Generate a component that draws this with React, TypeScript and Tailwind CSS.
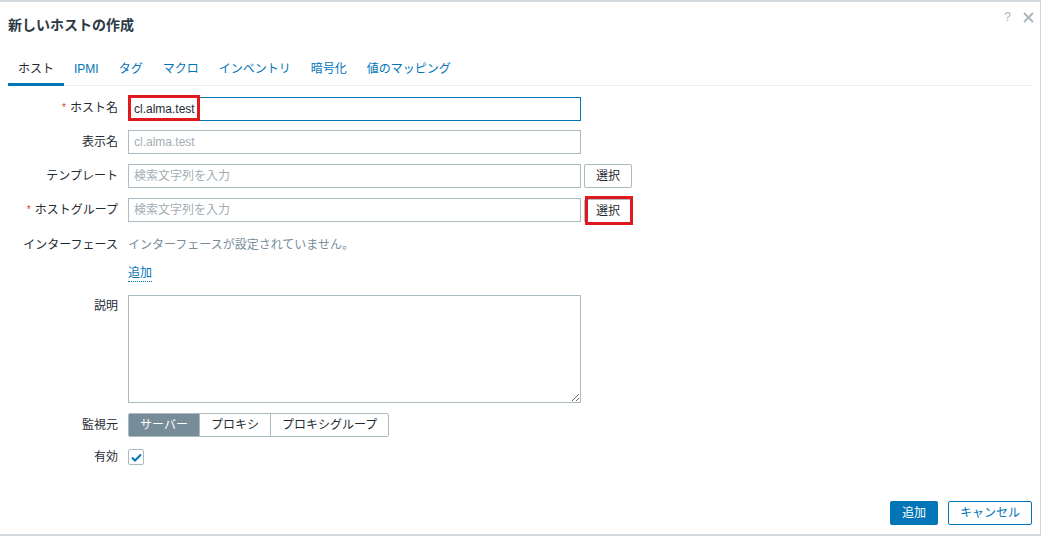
import { ReactNode } from 'react'

const font = "font-['Liberation_Sans','Noto_Sans_CJK_JP',sans-serif]"

function Label({ children, required }: { children: ReactNode; required?: boolean }) {
  return (
    <div className="w-[110px] mr-[10px] shrink-0 text-right text-[12px] leading-[16px] text-[#1f2c33]">
      {required && <span className="text-[#e33734] text-[10px] mr-[4px] align-top">*</span>}
      {children}
    </div>
  )
}

function SelectButton() {
  return (
    <button className="ml-[3px] h-[24px] w-[48px] border border-[#acbbc2] rounded-[2px] bg-white text-[12px] text-[#1f2c33]">
      選択
    </button>
  )
}

const tabs = ['ホスト', 'IPMI', 'タグ', 'マクロ', 'インベントリ', '暗号化', '値のマッピング']

export default function App() {
  return (
    <div className={`${font} w-[1041px] h-[536px] bg-[#d3d8dc] flex flex-col`}>
      <div className="mt-[2px] mb-[2px] mr-[1px] flex-1 bg-white flex flex-col pl-[8px] pr-[8px] relative">
        {/* header */}
        <div className="pt-[13px] h-[51px] flex items-start justify-between">
          <h4 className="text-[14px] leading-[20px] font-bold text-[#2b3a42]">新しいホストの作成</h4>
          <div className="flex items-center gap-[12px] -mt-[7px] mr-[-2px] text-[#aab4ba]">
            <span className="text-[12px]">?</span>
            <svg width="11" height="11" viewBox="0 0 11 11" stroke="currentColor" strokeWidth="1.8">
              <path d="M1 1 L10 10 M10 1 L1 10" />
            </svg>
          </div>
        </div>

        {/* tabs */}
        <div className="flex border-b border-[#ebeef0]">
          {tabs.map((t, i) => (
            <div
              key={t}
              className={`px-[10px] pt-[8px] pb-[6px] text-[12px] leading-[16px] border-b-[3px] -mb-px ${
                i === 0 ? 'border-[#0275b8] text-[#1f2c33]' : 'border-transparent text-[#0275b8]'
              }`}
            >
              {t}
            </div>
          ))}
        </div>

        {/* form */}
        <div className="pt-[10px] flex flex-col">
          <div className="flex items-center h-[24px]">
            <Label required>ホスト名</Label>
            <div className="relative">
              <input
                readOnly
                value="cl.alma.test"
                className="w-[453px] h-[24px] border border-[#0275b8] px-[5px] text-[12px] text-[#1f2c33] outline-none"
              />
              <div className="absolute left-0 top-[-1px] w-[72px] h-[26px] border-[3px] border-[#e0191f]" />
            </div>
          </div>

          <div className="flex items-center h-[24px] mt-[10px]">
            <Label>表示名</Label>
            <input
              readOnly
              placeholder="cl.alma.test"
              className="w-[453px] h-[24px] border border-[#acbbc2] px-[5px] text-[12px] placeholder:text-[#a3aeb4] outline-none"
            />
          </div>

          <div className="flex items-center h-[24px] mt-[10px]">
            <Label>テンプレート</Label>
            <input
              readOnly
              placeholder="検索文字列を入力"
              className="w-[453px] h-[24px] border border-[#acbbc2] px-[5px] text-[12px] placeholder:text-[#a3aeb4] outline-none"
            />
            <SelectButton />
          </div>

          <div className="flex items-center h-[24px] mt-[10px]">
            <Label required>ホストグループ</Label>
            <input
              readOnly
              placeholder="検索文字列を入力"
              className="w-[453px] h-[24px] border border-[#acbbc2] px-[5px] text-[12px] placeholder:text-[#a3aeb4] outline-none"
            />
            <div className="relative">
              <SelectButton />
              <div className="absolute left-[4px] top-[-2px] w-[48px] h-[29px] border-[3px] border-[#e0191f]" />
            </div>
          </div>

          <div className="flex items-center h-[22px] mt-[12px]">
            <Label>インターフェース</Label>
            <span className="text-[12px] text-[#768d99]">インターフェースが設定されていません。</span>
          </div>

          <div className="flex items-start h-[19px] mt-[10px]">
            <div className="w-[120px] shrink-0" />
            <span className="text-[12px] leading-[15px] text-[#0275b8] border-b border-dotted border-[#0275b8]">追加</span>
          </div>

          <div className="flex items-start mt-[10px]">
            <div className="pt-[3px]">
              <Label>説明</Label>
            </div>
            <textarea className="w-[453px] h-[108px] border border-[#acbbc2] outline-none block" />
          </div>

          <div className="flex items-center h-[24px] mt-[10px]">
            <Label>監視元</Label>
            <div className="flex h-[24px] border border-[#acbbc2] rounded-[2px] text-[12px]">
              <div className="px-[11px] flex items-center bg-[#768d99] text-white">サーバー</div>
              <div className="px-[11px] flex items-center text-[#1f2c33] border-l border-[#acbbc2]">プロキシ</div>
              <div className="px-[11px] flex items-center text-[#1f2c33] border-l border-[#acbbc2]">プロキシグループ</div>
            </div>
          </div>

          <div className="flex items-center h-[22px] mt-[9px]">
            <Label>有効</Label>
            <div className="w-[16px] h-[16px] border border-[#acbbc2] rounded-[2px] flex items-center justify-center">
              <svg width="11" height="9" viewBox="0 0 11 9" fill="none" stroke="#0275b8" strokeWidth="2">
                <path d="M1 4.5 L4 7.5 L10 1.5" />
              </svg>
            </div>
          </div>
        </div>

        {/* footer */}
        <div className="mt-auto mb-[9px] flex justify-end gap-[10px]">
          <button className="h-[24px] w-[48px] bg-[#0275b8] rounded-[2px] text-white text-[12px]">追加</button>
          <button className="h-[24px] w-[84px] border border-[#0275b8] rounded-[2px] bg-white text-[#0275b8] text-[12px]">
            キャンセル
          </button>
        </div>
      </div>
    </div>
  )
}
